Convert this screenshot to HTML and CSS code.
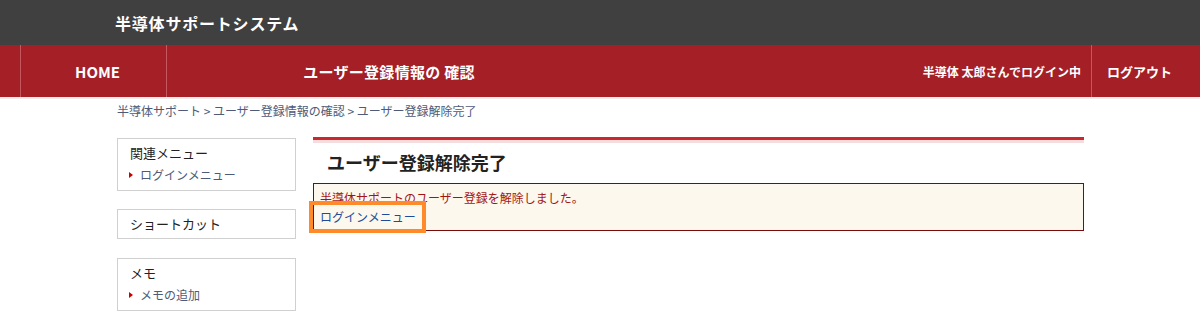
FILE: index.html
```html
<!DOCTYPE html>
<html lang="ja">
<head>
<meta charset="utf-8">
<title>ユーザー登録解除完了</title>
<link rel="stylesheet" href="styles.css">
</head>
<body>
<header class="site-header">
  <div class="site-title">半導体サポートシステム</div>
</header>
<nav class="gnav">
  <div class="gnav-home">HOME</div>
  <div class="gnav-page">ユーザー登録情報の 確認</div>
  <div class="gnav-spacer"></div>
  <div class="gnav-user">半導体 太郎さんでログイン中</div>
  <div class="gnav-logout">ログアウト</div>
</nav>
<div class="container">
  <div class="breadcrumb">半導体サポート &gt; ユーザー登録情報の確認 &gt; ユーザー登録解除完了</div>
  <div class="layout">
    <aside class="sidebar">
      <div class="side-box">
        <div class="side-title">関連メニュー</div>
        <div class="side-link">ログインメニュー</div>
      </div>
      <div class="side-box side-box-single">
        <div class="side-title">ショートカット</div>
      </div>
      <div class="side-box side-box-last">
        <div class="side-title">メモ</div>
        <div class="side-link">メモの追加</div>
      </div>
    </aside>
    <main class="main">
      <div class="main-rule"></div>
      <h1 class="page-title">ユーザー登録解除完了</h1>
      <div class="message">
        <div class="message-text">半導体サポートのユーザー登録を解除しました。</div>
        <div class="message-link-wrap">
          <a class="message-link" href="#">ログインメニュー</a>
          <span class="highlight"></span>
        </div>
      </div>
    </main>
  </div>
</div>
</body>
</html>
```

FILE: styles.css
```css
* { box-sizing: border-box; }
body {
  margin: 0;
  font-family: "Noto Sans CJK JP", "Noto Sans", sans-serif;
  color: #222;
  background: #fff;
}
.site-header {
  height: 45px;
  background: #404040;
  display: flex;
  align-items: center;
  padding-left: 115px;
}
.site-title {
  color: #fff;
  font-size: 16px;
  font-weight: bold;
  letter-spacing: 0.8px;
}
.gnav {
  height: 54px;
  background: #a51f27;
  border-bottom: 2px solid #ececec;
  display: flex;
  align-items: stretch;
  padding-left: 20px;
  color: #fff;
  font-weight: bold;
  font-size: 13px;
}
.gnav > div {
  display: flex;
  align-items: center;
}
.gnav-home {
  width: 147px;
  justify-content: center;
  border-left: 1px solid #c4585e;
  border-right: 1px solid #c4585e;
  font-size: 15px;
  padding-left: 8px;
}
.gnav-page {
  width: 444px;
  justify-content: center;
  font-size: 15px;
  letter-spacing: 0.3px;
}
.gnav-spacer { flex: 1; }
.gnav-user {
  font-size: 12px;
  padding-right: 10px;
}
.gnav-logout {
  border-left: 1px solid #c4585e;
  padding: 0 28px 0 15px;
}
.container {
  margin-left: 117px;
  width: 967px;
}
.breadcrumb {
  font-size: 12px;
  color: #4e5b78;
  padding-top: 3px;
  height: 39px;
  line-height: 18px;
}
.layout {
  display: flex;
  gap: 17px;
}
.sidebar {
  width: 179px;
  display: flex;
  flex-direction: column;
  gap: 18px;
}
.side-box {
  border: 1px solid #d0d0d0;
  padding: 4px 12px 0 12px;
  height: 53px;
}
.side-box-single {
  height: 30px;
  padding-top: 4px;
}
.side-box-last {
  margin-top: 1px;
}
.side-title {
  font-size: 13px;
  line-height: 20px;
  color: #222;
}
.side-link {
  font-size: 12px;
  line-height: 18px;
  margin-top: 3px;
  color: #4e5b78;
  padding-left: 10px;
  position: relative;
}
.side-link::before {
  content: "";
  position: absolute;
  left: -1px;
  top: 6px;
  border-left: 4px solid #c00;
  border-top: 3px solid transparent;
  border-bottom: 3px solid transparent;
}
.main {
  width: 771px;
}
.main-rule {
  height: 6px;
  border-top: 3px solid #c9282e;
  background: #f6dcdc;
  margin-top: -1px;
}
.page-title {
  margin: 0;
  font-size: 18px;
  font-weight: bold;
  color: #222;
  padding: 6px 0 0 14px;
  height: 40px;
  line-height: 26px;
}
.message {
  border: 1px solid #7b0a0a;
  background: #fdf8ee;
  height: 48px;
  padding: 5px 6px 0 6px;
  font-size: 12px;
  line-height: 18px;
}
.message-text {
  color: #a31515;
}
.message-link-wrap {
  position: relative;
  display: inline-block;
  margin-top: 1px;
}
.message-link {
  color: #1f4c9a;
  text-decoration: none;
}
.highlight {
  position: absolute;
  left: -11px;
  top: -7px;
  width: 117px;
  height: 32px;
  border: 4px solid #ff8a2a;
}
```
